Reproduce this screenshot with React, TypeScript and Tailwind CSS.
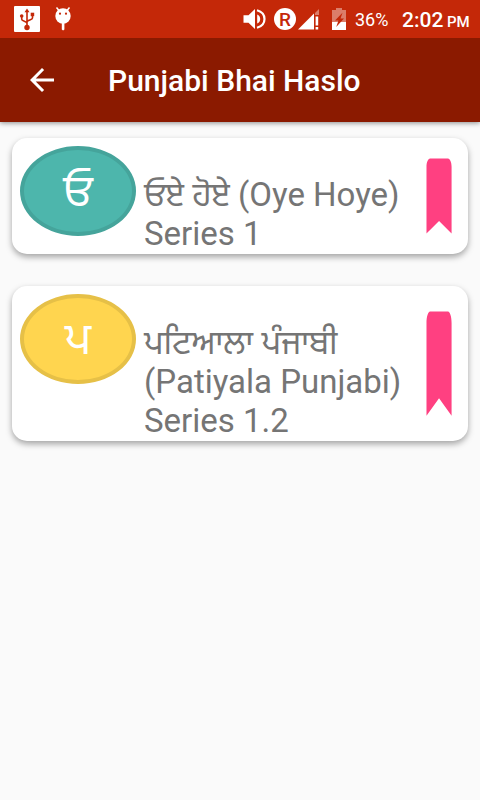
type Series = {
  letter: string;
  title: string[];
  badge: string;
};

const seriesList: Series[] = [
  {
    letter: 'ਓ',
    title: ['ਓਏ ਹੋਏ (Oye Hoye)', 'Series 1'],
    badge: 'bg-[#4db6ac] border-[#45a49b]',
  },
  {
    letter: 'ਪ',
    title: ['ਪਟਿਆਲਾ ਪੰਜਾਬੀ', '(Patiyala Punjabi)', 'Series 1.2'],
    badge: 'bg-[#ffd54f] border-[#e6c047]',
  },
];

function UsbIcon() {
  return (
    <svg className="ml-3.5 h-[26px] w-[26px]" viewBox="0 0 26 26">
      <rect width="26" height="26" rx="1" fill="#fff" />
      <g fill="none" stroke="#c42808" strokeWidth="1.6">
        <path d="M13 5v17M7.7 11v2.2c0 2.2 5.3 2 5.3 4.3M18.5 9v3c0 2.5-5.5 1.5-5.5 4.3" />
      </g>
      <g fill="#c42808">
        <path d="M13 2.5l2.500 3.700h-5z" />
        <circle cx="7.7" cy="10" r="1.8" />
        <path d="M16.700 6.700h3.500v3.500h-3.500z" />
        <circle cx="13" cy="21.500" r="2.700" />
      </g>
    </svg>
  );
}

function DebugIcon() {
  return (
    <svg className="ml-[15px] h-[24px] w-4" viewBox="0 0 16 24">
      <path d="M1.500 .5l2.500 3M14.500 .5l-2.500 3" stroke="#fff" strokeWidth="1.5" />
      <circle cx="8" cy="9" r="7.7" fill="#fff" />
      <path d="M6.800 16h2.600v6.500l-1.300 1-1.300-1z" fill="#fff" />
      <circle cx="5" cy="6.700" r="1.100" fill="#c42808" />
      <circle cx="11" cy="6.700" r="1.100" fill="#c42808" />
    </svg>
  );
}

function VolumeIcon() {
  return (
    <svg className="h-6 w-6" viewBox="0 0 24 24">
      <path d="M.5 8.300h5L12 2v20l-6.500-6.300h-5z" fill="#fff" />
      <path d="M14.200 7.500c4 1.600 4 7.400 0 9z" fill="#fff" />
      <path
        d="M14 3.200c10 2.800 10 14.800 0 17.600"
        fill="none"
        stroke="#fff"
        strokeWidth="2.200"
      />
    </svg>
  );
}

function SignalIcon() {
  return (
    <svg className="ml-[2px] h-[21px] w-[21px]" viewBox="0 0 21 21">
      <path d="M21 0v6h-4v-2z" fill="#fff" opacity=".4" />
      <path d="M0 20.500L16 4.500v16z" fill="#fff" />
      <path d="M17.600 7.500h2.600v9h-2.600zM17.600 18h2.600v2.500h-2.600z" fill="#fff" />
    </svg>
  );
}

function BatteryIcon() {
  return (
    <svg className="ml-[13px] h-[22px] w-[14px]" viewBox="0 0 14 22">
      <path d="M4 0h6v2h4v12H0V2h4z" fill="#fff" opacity=".4" />
      <path d="M0 14h14v8H0z" fill="#fff" />
      <path d="M10.500 4.800L3 12.500h3.500L4.200 19l7.800-8.500H8.500z" fill="#c42808" />
    </svg>
  );
}

function StatusBar() {
  return (
    <div className="relative z-10 flex h-[38px] items-center bg-[#c42808] text-white">
      <UsbIcon />
      <DebugIcon />
      <div className="ml-auto flex items-center">
        <VolumeIcon />
        <span className="ml-[7px] flex h-[22px] w-[22px] items-center justify-center rounded-full bg-white text-[19px] leading-none font-medium text-[#c42808]">
          R
        </span>
        <SignalIcon />
        <BatteryIcon />
        <span className="ml-[9px] w-[47px] pt-0.5 text-[18px] leading-5">36%</span>
        <span className="w-[45px] pt-0.5 text-[21px] leading-5 font-medium">2:02</span>
        <span className="w-[33px] pt-1.5 text-[15px] leading-5 font-medium">PM</span>
      </div>
    </div>
  );
}

function Toolbar() {
  return (
    <header className="relative flex h-[84px] items-center bg-[#8b1a00] shadow-[0_1px_5px_rgba(0,0,0,0.45)]">
      <button type="button" aria-label="Back" className="ml-6">
        <svg className="h-9 w-9" viewBox="0 0 24 24" fill="#fff">
          <path d="M20 11H7.830l5.590-5.590L12 4l-8 8 8 8 1.410-1.410L7.830 13H20v-2z" />
        </svg>
      </button>
      <h1 className="ml-12 pt-0.5 text-[30px] leading-9 font-medium whitespace-nowrap text-white">
        Punjabi Bhai Haslo
      </h1>
    </header>
  );
}

function SeriesCard({ series }: { series: Series }) {
  return (
    <li className="flex rounded-[15px] bg-white px-2 shadow-[0_3px_6px_rgba(0,0,0,0.35)]">
      <div
        className={`mt-2 flex h-[90px] w-[116px] shrink-0 justify-center rounded-[50%] border-4 text-[45px] leading-[81px] text-white ${series.badge}`}
      >
        {series.letter}
      </div>
      <div className="ml-2 flex-1 pt-[37px] pb-px text-[33px] leading-[39px] whitespace-nowrap text-[#757575]">
        {series.title.map((line) => (
          <p key={line} className="h-[39px]">
            {line}
          </p>
        ))}
      </div>
      <div className="my-2 flex w-[43px] shrink-0">
        <svg
          className="h-auto w-full self-stretch"
          viewBox="-0.3 0 24 24"
          preserveAspectRatio="none"
          fill="#ff4081"
        >
          <path d="M17 3H7c-1.100 0-2 .9-2 2v16l7-3 7 3V5c0-1.100-.9-2-2-2z" />
        </svg>
      </div>
    </li>
  );
}

function App() {
  return (
    <div className="h-[800px] w-[480px] overflow-hidden bg-[#fafafa] font-['Roboto','Noto_Sans_Gurmukhi','Noto_Sans',sans-serif]">
      <StatusBar />
      <Toolbar />
      <ul className="flex flex-col gap-8 px-3 pt-4">
        {seriesList.map((series) => (
          <SeriesCard key={series.letter} series={series} />
        ))}
      </ul>
    </div>
  );
}

export default App;
